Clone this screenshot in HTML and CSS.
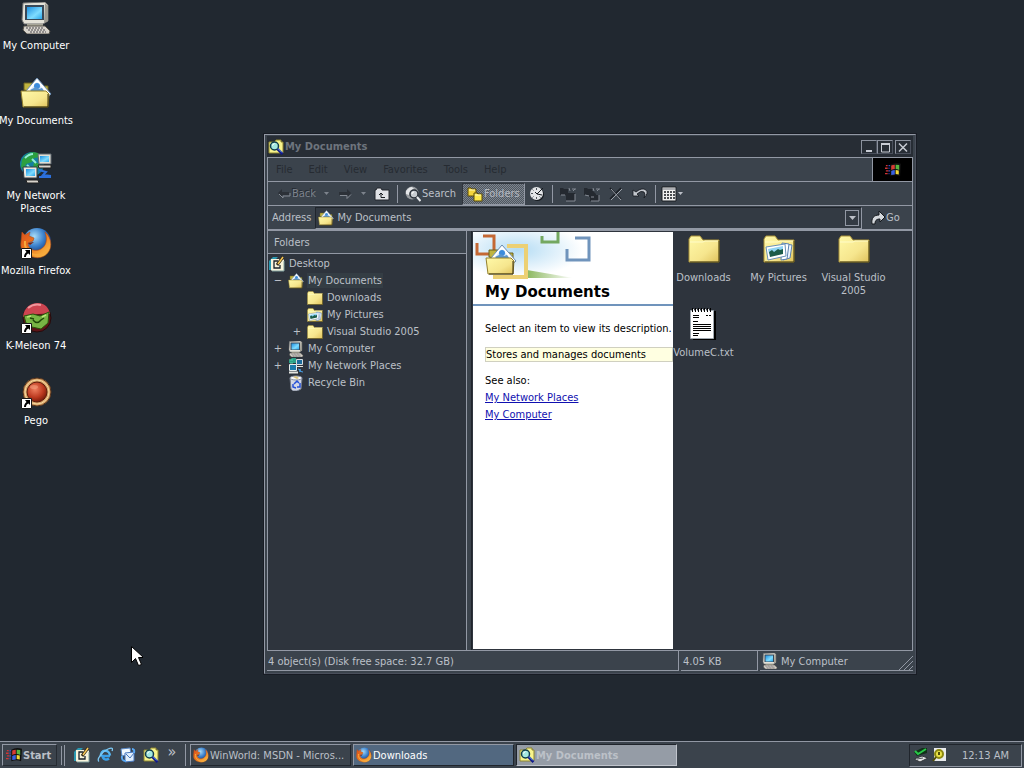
FILE: index.html
```html
<!DOCTYPE html>
<html lang="en">
<head>
    <title>My Documents</title>
    <meta charset="UTF-8">
    <meta name="viewport" content="width=device-width, initial-scale=1.0">
    <link rel="stylesheet" href="styles.css">
</head>
<body>
    <!-- Icon sprite -->
    <svg class="sprite" aria-hidden="true">
        <defs>
            <linearGradient id="gFolder" x1="0" y1="0" x2="1" y2="1">
                <stop offset="0" stop-color="#fff9a8"/><stop offset=".6" stop-color="#f6e68e"/><stop offset="1" stop-color="#dfc25c"/>
            </linearGradient>
            <linearGradient id="gScreen" x1="0" y1="0" x2="1" y2="1">
                <stop offset="0" stop-color="#1c8fe0"/><stop offset=".6" stop-color="#7fdcff"/><stop offset="1" stop-color="#2aa6ea"/>
            </linearGradient>
            <radialGradient id="gGlobe" cx=".4" cy=".3" r=".7">
                <stop offset="0" stop-color="#a8dcf8"/><stop offset=".5" stop-color="#3a80cc"/><stop offset="1" stop-color="#0e2460"/>
            </radialGradient>
            <linearGradient id="gFox" x1="0" y1="0" x2="1" y2="1">
                <stop offset="0" stop-color="#d8501c"/><stop offset=".5" stop-color="#ee7c20"/><stop offset="1" stop-color="#fcd050"/>
            </linearGradient>
            <radialGradient id="gRed" cx=".4" cy=".35" r=".7">
                <stop offset="0" stop-color="#f08060"/><stop offset=".6" stop-color="#bc3a20"/><stop offset="1" stop-color="#701808"/>
            </radialGradient>
            <radialGradient id="gSky" cx=".4" cy=".4" r=".6">
                <stop offset="0" stop-color="#b4dcf4"/><stop offset="1" stop-color="#ffffff"/>
            </radialGradient>
            <linearGradient id="gGrass" x1="0" y1="0" x2="1" y2="0">
                <stop offset="0" stop-color="#8cb860"/><stop offset="1" stop-color="#ffffff"/>
            </linearGradient>
        </defs>

        <symbol id="folder" viewBox="0 0 32 32">
            <path d="M1 6 3 3h9l3 4h16v22H1z" fill="url(#gFolder)" stroke="#a89038"/>
            <path d="M2 9h13l2-1h13" fill="none" stroke="#fffcc8"/>
            <path d="M31 8v21H2" fill="none" stroke="#4c4418"/>
        </symbol>
        <symbol id="pictures" viewBox="0 0 32 32">
            <use href="#folder"/>
            <path d="m22 11 7 1-2 13-7 2z" fill="#eef6ff" stroke="#5a80b0"/>
            <path d="m19 10 7 1-2 15-6 1z" fill="#fff" stroke="#5a80b0"/>
            <path d="m3 14 19-3 1 12-18 4z" fill="#fff" stroke="#6890b8"/>
            <path d="m5 16 15-3v5L6 21z" fill="#90d4f4"/>
            <path d="m6 19 3-2 2 2 4-3 2 1 3-1v5L7 24z" fill="#1c5c48"/>
        </symbol>
        <symbol id="docs" viewBox="0 0 32 32">
            <path d="M4 13V6h9l3 3h12v9z" fill="#c0b440" stroke="#6a6020"/>
            <path d="M17 1 31 17l-8 7L6 14z" fill="#fff" stroke="#6a8cb0"/>
            <path d="m17 5 8 9-7 5-8-6z" fill="#d4e8fa"/>
            <circle cx="17" cy="9" r="3" fill="#3c8cdc"/>
            <path d="m10 13 6-3 3 2 3-1 2 3-7 5z" fill="#5a94cc"/>
            <path d="M1 14h25l3 3-1 13H3z" fill="url(#gFolder)" stroke="#94802c"/>
            <path d="M28 17v13H4" fill="none" stroke="#383010"/>
        </symbol>
        <symbol id="computer" viewBox="0 0 32 32">
            <path d="M3 1 25 0l3 3v16l-5 3H4L2 18z" fill="#e4e2d8" stroke="#707070"/>
            <path d="m25 1 3 3v15l-4 2z" fill="#9c9a90"/>
            <path d="M5 3h19v15H5z" fill="#384858"/>
            <path d="M7 5h15v12H7z" fill="url(#gScreen)"/>
            <path d="M7 22h16v3H7z" fill="#a8a698"/>
            <path d="M4 24h21l5 5-1 3H7l-4-4z" fill="#d8d4cc" stroke="#58544c"/>
            <path d="M6 26h18M8 28h18M10 30h16" stroke="#4c4a50" stroke-dasharray="2 1"/>
        </symbol>
        <symbol id="network" viewBox="0 0 32 32">
            <circle cx="12" cy="12" r="12" fill="#1480a0"/>
            <path d="M2 8C6 1 12-1 18 1l3 4-7 1-2 4-6 2-2 6-3-3zM14 10l6 2-3 6-4-2z" fill="#2ca040"/>
            <path d="M5 6q4-4 8-4M12 7l4 4M7 13l4 4" fill="none" stroke="#90ecd8" stroke-width="2"/>
            <path d="M18 2h13v10H19z" fill="#e0ded4" stroke="#606870"/>
            <path d="M20 4h9v6h-9z" fill="url(#gScreen)"/>
            <path d="M18 13h13v3H19z" fill="#d8d4cc" stroke="#202020"/>
            <path d="M3 15h14v11H4z" fill="#ece8e0" stroke="#303840"/>
            <path d="M6 17h9v7H6z" fill="url(#gScreen)"/>
            <path d="M6 28h12l1 3H7z" fill="#d8d4cc" stroke="#202020"/>
            <path d="m19 18 7 2-3 3 8 1M19 25h12" fill="none" stroke="#2c70dc" stroke-width="2"/>
        </symbol>
        <symbol id="network-sm" viewBox="0 0 16 16">
            <path d="M1 3 4 0h4v5H1z" fill="#28a088"/>
            <path d="M1 2h4M2 5h3" stroke="#58d0a8"/>
            <path d="M8.500 1.500h6v5h-6z" fill="#1c6c9c" stroke="#d4dce0"/>
            <path d="M8 8.500h7" stroke="#e4e4e0"/>
            <path d="M1.500 6.500h7v6h-7z" fill="#1c7cac" stroke="#e8ecec"/>
            <path d="M1 14.500h9" stroke="#e4e4e0" stroke-width="2"/>
            <path d="m10 11 3 1-2 1 4 1" fill="none" stroke="#48a0e8"/>
        </symbol>
        <symbol id="firefox" viewBox="0 0 32 32">
            <circle cx="17" cy="15" r="14" fill="url(#gGlobe)"/>
            <path d="M2 5 5 8l5-3-1 4 5 2-1 3-5 2c0 7 8 9 13 6 5-3 7-9 4-17 5 4 7 11 5 17-3 8-11 10-17 8C3 28 0 22 1 15z" fill="url(#gFox)" stroke="#b44c14" stroke-width=".6"/>
            <path d="M5 14c-1 9 5 14 13 14 6 0 10-4 11-8" fill="none" stroke="#f8a83c" stroke-width="2"/>
            <path d="m8 16 6-1-4 3z" fill="#7c2410"/>
        </symbol>
        <symbol id="shortcut" viewBox="0 0 11 11">
            <path d="M.5.5h10v10H.5z" fill="#fff" stroke="#181818"/>
            <path d="M4 2h5v5L7.500 5.500C6 6 5 7 5 9H3c0-2 1-4 2.500-5z" fill="#000"/>
        </symbol>
        <symbol id="kmeleon" viewBox="0 0 32 32">
            <circle cx="17" cy="16" r="14" fill="#5c1418" stroke="#240c0c"/>
            <path d="M3 15C4 5 11 1 18 1c7 0 11 5 12 11-9-1-18 0-27 3z" fill="#cc4450"/>
            <path d="M8 6q6-5 13-3" fill="none" stroke="#f0969c" stroke-width="2"/>
            <path d="m4 14 9-2 7 2 9-4-1 11-7 6-9-2-6-4z" fill="#78b444" stroke="#28540c"/>
            <path d="M13 18q4 5 8 0l3-2M10 16l4 1" fill="none" stroke="#204808" stroke-width="1.500"/>
            <path d="m7 15 4-1M22 15l4-2" stroke="#b8e878" stroke-width="1.500"/>
        </symbol>
        <symbol id="pego" viewBox="0 0 32 32">
            <circle cx="17" cy="15" r="14" fill="#d8a468" stroke="#58341c"/>
            <circle cx="17" cy="15" r="12" fill="none" stroke="#f4d8a0"/>
            <circle cx="17" cy="15" r="10" fill="url(#gRed)" stroke="#5c1c0c"/>
            <ellipse cx="14" cy="10" rx="4" ry="2" fill="#f49c7c" opacity=".6"/>
        </symbol>
        <symbol id="notepad" viewBox="0 0 32 32">
            <path d="M5 3h23v29H5z" fill="#000"/>
            <path d="M2.500 2.500h23v28h-23z" fill="#fff" stroke="#a0a8b0"/>
            <path d="M4.500 0v4M7.500 0v4M10.500 0v4M13.500 0v4M16.500 0v4M19.500 0v4M22.500 0v4" stroke="#000"/>
            <path d="M5.500 1v2M8.500 1v2M11.500 1v2M14.500 1v2M17.500 1v2M20.500 1v2" stroke="#fff"/>
            <path d="M5 7.500h6M18 7.500h2M21 7.500h2M5 9.500h6M5 13.500h5M5 16.500h18M5 18.500h18M5 20.500h18M5 22.500h18M5 25.500h6M5 27.500h5" stroke="#000"/>
        </symbol>
        <symbol id="explore" viewBox="0 0 16 16">
            <path d="M1 3h5l2-2h5v2h2v11H1z" fill="#f8f48c" stroke="#8c8430"/>
            <circle cx="6.500" cy="7" r="4" fill="#a4e8e0" stroke="#103c4c" stroke-width="1.500"/>
            <path d="M4 6.500 6.500 4.500" stroke="#fff"/>
            <path d="m9.500 10 5 5" stroke="#10188c" stroke-width="2.500"/>
            <path d="m10 9.500 4 4" stroke="#78b4f0"/>
        </symbol>
        <symbol id="desktop" viewBox="0 0 16 16">
            <path d="M0 5 4 1h5L3 7v7H0z" fill="#2a98b0"/>
            <path d="M2 3h12l1 1v11H3l-1-1z" fill="#f8f4dc"/>
            <path d="M15 5v10H3" fill="none" stroke="#80a0a0"/>
            <path d="M9 5H5v7h6V9" fill="none" stroke="#182028" stroke-width="1.300"/>
            <path d="m8 9 6-8" stroke="#302818" stroke-width="3"/>
            <path d="m9 8 5-7" stroke="#f8c858" stroke-width="1.500"/>
        </symbol>
        <symbol id="recycle" viewBox="0 0 16 16">
            <path d="M2 3h12l-1 11-4 2H5l-2-2z" fill="#d4d8e4" stroke="#747c8c"/>
            <ellipse cx="8" cy="3" rx="6" ry="2" fill="#f8f8fc" stroke="#8890a0"/>
            <path d="m5 2 3-1 3 2-2 1z" fill="#d8c078"/>
            <path d="m6 9 3-3 2 2M12 8v4h-3M8 13l-3-1V9" fill="none" stroke="#2450d8" stroke-width="1.500"/>
        </symbol>
        <symbol id="ie" viewBox="0 0 16 16">
            <path d="M13 9H5.500C6 13 10 13 12 11.500" fill="none" stroke="#3ca0e8" stroke-width="2.400"/>
            <path d="M4 9.500C3 2 12.500 2 13 8.500" fill="none" stroke="#58b8f4" stroke-width="2.400"/>
            <path d="M2 14.500C-1 12 6 4 11 2s5 0 4 2" fill="none" stroke="#7cc8f4" stroke-width="1.300"/>
        </symbol>
        <symbol id="mail" viewBox="0 0 16 16">
            <path d="m1 2 9-1 1 6-9 2z" fill="#f0f8ff" stroke="#5888c8"/>
            <path d="m5 6 9-1v9l-9 1z" fill="#e0eefc" stroke="#4878c0"/>
            <path d="m6 7 4 4 4-5" fill="none" stroke="#4878c0"/>
            <path d="M2 9q-1 5 4 5M12 2q3 0 2 4" fill="none" stroke="#58a8f4" stroke-width="2"/>
        </symbol>
        <symbol id="flag" viewBox="0 0 18 16">
            <path d="M1 3h2M0 6h3M1 9h3M0 12h3" stroke="#d03434" stroke-width="1.500"/>
            <path d="M4 3h2M4 6h1M4 9h2M4 12h1" stroke="#3050d0" stroke-width="1.500"/>
            <path d="M6 2q5-3 12-1l-1 14q-5-2-11 0z" fill="#101010"/>
            <path d="M7 3q2-1 4-1v5q-2 0-4 1z" fill="#d83c34"/>
            <path d="M12 2q2 0 4 .500V8q-2-1-4-1z" fill="#58b440"/>
            <path d="M7 9q2-1 4-1v5q-2 0-4 .500z" fill="#3860e0"/>
            <path d="M12 8q2 0 3.500.500V13q-2 0-3.500-.500z" fill="#f0d838"/>
        </symbol>
        <symbol id="search" viewBox="0 0 16 16">
            <circle cx="7" cy="7" r="6.500" fill="#989ca0"/>
            <path d="M1 5q3-4 6-4l2 2-4 2-1 4-3-1z" fill="#e4e6e8"/>
            <circle cx="9" cy="8" r="4" fill="#c8ccd0" stroke="#2a3038" stroke-width="1.500"/>
            <path d="M7 8q0-2 2-2" fill="none" stroke="#fff"/>
            <path d="m12 11 3.500 4" stroke="#e8eaec" stroke-width="2"/>
        </symbol>
        <symbol id="folders" viewBox="0 0 16 16">
            <path d="M1 2h3l1 1h4v7H1z" fill="#f4d43c" stroke="#5c4c08"/>
            <path d="M7 7h3l1 1h4v7H7z" fill="#fce84c" stroke="#5c4c08"/>
            <path d="M2 4h6M8 9h6" stroke="#fffab8"/>
        </symbol>
        <symbol id="up" viewBox="0 0 16 16">
            <path d="M1 4h1l1-2h4l1 2h7v10H1z" fill="#e0e2e6" stroke="#22262c"/>
            <path d="M11 11.500H7V7M5 9l2-2 2 2" fill="none" stroke="#181c20"/>
        </symbol>
        <symbol id="back" viewBox="0 0 14 14">
            <path d="m1 6 4-4v3h7v3H5v3z" fill="#2c3138"/>
            <path d="m2 7 4 4V9h7V6" fill="none" stroke="#858b94"/>
        </symbol>
        <symbol id="forward" viewBox="0 0 14 14">
            <path d="m13 6-4-4v3H1v3h8v3z" fill="#2c3138"/>
            <path d="M2 8.500h7v3l4-4" fill="none" stroke="#858b94"/>
        </symbol>
        <symbol id="history" viewBox="0 0 16 16">
            <circle cx="8.500" cy="8.500" r="6.500" fill="#15191e"/>
            <circle cx="7.500" cy="7.500" r="6.500" fill="#e4e6e8"/>
            <path d="M7.500 2v2M2 7.500h2M7.500 11v2M3.500 3.500l1 1M3.500 11.500l1-1M10.500 10.500l1 1" stroke="#50565e"/>
            <path d="m6 6 2 2 6-6M8 8l5 1" fill="none" stroke="#15191e"/>
        </symbol>
        <symbol id="moveto" viewBox="0 0 16 16">
            <path d="M0 2h3l1 1h4v6H0zM6 7h9v8H6z" fill="#242930"/>
            <path d="M15 8v7H6M1 9h4M9 2l1 3M12 3h4M13 5l2-2" fill="none" stroke="#858b94"/>
        </symbol>
        <symbol id="copyto" viewBox="0 0 16 16">
            <path d="M0 2h3l1 1h4v6H0zM4 5h5l3 3v3H5zM6 9h9v6H6z" fill="#242930"/>
            <path d="M15 9v6H7M1 9l4 1M9 2l1 3M12 3h4M7 11h3M13 5l2-2" fill="none" stroke="#858b94"/>
        </symbol>
        <symbol id="delete" viewBox="0 0 14 14">
            <path d="m1 1 11 11M12 1 1 12" stroke="#1c2026" stroke-width="1.500"/>
            <path d="m2 2 10 11M13 2 2 13" stroke="#9ca2aa"/>
        </symbol>
        <symbol id="undo" viewBox="0 0 16 16">
            <path d="M1 4v6h6L5 8q4-4 7-2 2 2 0 6 5-5 2-8-4-3-10 2z" fill="#c4c8ce" stroke="#14181e" stroke-width=".8"/>
        </symbol>
        <symbol id="views" viewBox="0 0 16 16">
            <path d="M1 1h14v14H1z" fill="#f0f0f0" stroke="#181c20"/>
            <path d="M1 3h14" stroke="#6c7078"/>
            <path d="M3 6h2M6 6h2M9 6h2M12 6h2M3 9h2M6 9h2M9 9h2M12 9h2M3 12h2M6 12h2M9 12h2M12 12h2" stroke="#15191e" stroke-width="1.500"/>
        </symbol>
        <symbol id="go" viewBox="0 0 14 14">
            <path d="M1 13C0 7 3 4 8 4V0l6 6-5 5V8C5 8 4 10 4 13z" fill="#d4d8dc" stroke="#14181c"/>
        </symbol>
        <symbol id="drop" viewBox="0 0 7 4">
            <path d="M0 0h7L3.500 4z" fill="currentColor"/>
        </symbol>
        <symbol id="traynet" viewBox="0 0 16 16">
            <path d="m1 5 8-4 5 0v5L4 9z" fill="#103018"/>
            <path d="m2 4 3 3 8-5" fill="none" stroke="#28c848" stroke-width="2"/>
            <path d="m1 12 8-3 6 2-8 4z" fill="#e0e2e4" stroke="#303438"/>
            <path d="m4 12 6-1" stroke="#505458"/>
        </symbol>
        <symbol id="traykey" viewBox="0 0 16 16">
            <path d="M3 1h12v13H3z" fill="#e8eaec"/>
            <circle cx="8" cy="7" r="4" fill="#e8e048" stroke="#8c8810" stroke-width="2"/>
            <path d="M8 5v3M2 14l3-4" stroke="#504c08" stroke-width="2"/>
        </symbol>
    </svg>

    <main class="desktop">
        <nav class="shortcuts" aria-label="Desktop">
            <a class="shortcut" href="#"><svg class="icon-lg"><use href="#computer"/></svg><span>My Computer</span></a>
            <a class="shortcut" href="#"><svg class="icon-lg"><use href="#docs"/></svg><span>My Documents</span></a>
            <a class="shortcut" href="#"><svg class="icon-lg"><use href="#network"/></svg><span>My Network Places</span></a>
            <a class="shortcut" href="#"><svg class="icon-lg"><use href="#firefox"/></svg><svg class="link-badge"><use href="#shortcut"/></svg><span>Mozilla Firefox</span></a>
            <a class="shortcut" href="#"><svg class="icon-lg"><use href="#kmeleon"/></svg><svg class="link-badge"><use href="#shortcut"/></svg><span>K-Meleon 74</span></a>
            <a class="shortcut" href="#"><svg class="icon-lg"><use href="#pego"/></svg><svg class="link-badge"><use href="#shortcut"/></svg><span>Pego</span></a>
        </nav>

        <section class="window">
            <header class="titlebar">
                <svg class="icon"><use href="#explore"/></svg>
                <h1>My Documents</h1>
                <div class="caption-buttons">
                    <button aria-label="Minimize"><svg viewBox="0 0 12 11"><path d="M3 9h6" stroke="#c8ccd4" stroke-width="2"/></svg></button>
                    <button aria-label="Maximize"><svg viewBox="0 0 12 11"><path d="M2 1.500h9M2.500 1v9h8V1" fill="none" stroke="#c8ccd4"/><path d="M2 2h9" stroke="#c8ccd4" stroke-width="2"/></svg></button>
                    <button class="close" aria-label="Close"><svg viewBox="0 0 12 11"><path d="m2 1.500 8 8M10 1.500l-8 8" stroke="#c8ccd4" stroke-width="1.500"/></svg></button>
                </div>
            </header>

            <div class="bars">
                <div class="menubar">
                    <button>File</button>
                    <button>Edit</button>
                    <button>View</button>
                    <button>Favorites</button>
                    <button>Tools</button>
                    <button>Help</button>
                    <div class="throbber"><svg class="icon"><use href="#flag"/></svg></div>
                </div>

                <div class="toolbar">
                    <button class="tool disabled"><svg class="icon-sm"><use href="#back"/></svg>Back</button>
                    <button class="tool arrow disabled" aria-label="Back list"><svg class="drop"><use href="#drop"/></svg></button>
                    <button class="tool disabled" aria-label="Forward"><svg class="icon-sm"><use href="#forward"/></svg></button>
                    <button class="tool arrow disabled" aria-label="Forward list"><svg class="drop"><use href="#drop"/></svg></button>
                    <button class="tool" aria-label="Up"><svg class="icon"><use href="#up"/></svg></button>
                    <span class="separator"></span>
                    <button class="tool"><svg class="icon"><use href="#search"/></svg>Search</button>
                    <button class="tool pressed"><svg class="icon"><use href="#folders"/></svg>Folders</button>
                    <button class="tool" aria-label="History"><svg class="icon"><use href="#history"/></svg></button>
                    <span class="separator"></span>
                    <button class="tool" aria-label="Move To"><svg class="icon"><use href="#moveto"/></svg></button>
                    <button class="tool" aria-label="Copy To"><svg class="icon"><use href="#copyto"/></svg></button>
                    <button class="tool" aria-label="Delete"><svg class="icon-sm"><use href="#delete"/></svg></button>
                    <button class="tool" aria-label="Undo"><svg class="icon"><use href="#undo"/></svg></button>
                    <span class="separator"></span>
                    <button class="tool views" aria-label="Views"><svg class="icon"><use href="#views"/></svg><svg class="drop"><use href="#drop"/></svg></button>
                </div>

                <div class="addressbar">
                    <label for="address">Address</label>
                    <div class="combo">
                        <svg class="icon"><use href="#docs"/></svg>
                        <select id="address"><option>My Documents</option></select>
                        <span class="combo-arrow"><svg class="drop"><use href="#drop"/></svg></span>
                    </div>
                    <button class="go"><svg class="icon-sm"><use href="#go"/></svg>Go</button>
                </div>
            </div>

            <div class="panes">
                <aside class="folders">
                    <h2>Folders</h2>
                    <ul class="tree">
                        <li>
                            <div class="node"><svg class="icon"><use href="#desktop"/></svg><span>Desktop</span></div>
                            <ul>
                                <li>
                                    <div class="node"><button class="toggle">−</button><svg class="icon"><use href="#docs"/></svg><span class="current">My Documents</span></div>
                                    <ul>
                                        <li><div class="node"><span class="toggle"></span><svg class="icon"><use href="#folder"/></svg><span>Downloads</span></div></li>
                                        <li><div class="node"><span class="toggle"></span><svg class="icon"><use href="#pictures"/></svg><span>My Pictures</span></div></li>
                                        <li><div class="node"><button class="toggle">+</button><svg class="icon"><use href="#folder"/></svg><span>Visual Studio 2005</span></div></li>
                                    </ul>
                                </li>
                                <li><div class="node"><button class="toggle">+</button><svg class="icon"><use href="#computer"/></svg><span>My Computer</span></div></li>
                                <li><div class="node"><button class="toggle">+</button><svg class="icon"><use href="#network-sm"/></svg><span>My Network Places</span></div></li>
                                <li><div class="node"><span class="toggle"></span><svg class="icon"><use href="#recycle"/></svg><span>Recycle Bin</span></div></li>
                            </ul>
                        </li>
                    </ul>
                </aside>

                <div class="content">
                    <article class="webview">
                        <header class="banner">
                            <svg class="banner-art" viewBox="0 0 200 48">
                                <path d="M0 0h110v36q-50 14-110 6z" fill="url(#gSky)"/>
                                <path d="M54 46V38q24 4 46 8z" fill="url(#gGrass)"/>
                                <path d="M34 14h19v31H20" fill="none" stroke="#ecd074" stroke-width="4"/>
                                <path d="M10 4h11v14M4 11v11h12" fill="none" stroke="#c46834" stroke-width="3"/>
                                <path d="M69 4v6h16V0" fill="none" stroke="#74a860" stroke-width="3"/>
                                <path d="M102 6h14v22H94V17" fill="none" stroke="#7094bc" stroke-width="3"/>
                                <svg x="12" y="12" width="32" height="32"><use href="#docs"/></svg>
                            </svg>
                            <h2>My Documents</h2>
                        </header>
                        <div class="webview-body">
                            <p>Select an item to view its description.</p>
                            <p class="hint">Stores and manages documents</p>
                            <p class="also">See also:</p>
                            <a href="#">My Network Places</a>
                            <a href="#">My Computer</a>
                        </div>
                    </article>

                    <div class="files">
                        <a class="file" href="#"><svg class="icon-lg"><use href="#folder"/></svg><span>Downloads</span></a>
                        <a class="file" href="#"><svg class="icon-lg"><use href="#pictures"/></svg><span>My Pictures</span></a>
                        <a class="file" href="#"><svg class="icon-lg"><use href="#folder"/></svg><span>Visual Studio 2005</span></a>
                        <a class="file" href="#"><svg class="icon-lg"><use href="#notepad"/></svg><span>VolumeC.txt</span></a>
                    </div>
                </div>
            </div>

            <footer class="statusbar">
                <span class="status-main">4 object(s) (Disk free space: 32.7 GB)</span>
                <span class="status-size">4.05 KB</span>
                <span class="status-zone"><svg class="icon"><use href="#computer"/></svg>My Computer</span>
                <svg class="grip" viewBox="0 0 14 14"><path d="M14 0 0 14M14 5 5 14M14 10l-4 4" stroke="#9298a4"/></svg>
            </footer>
        </section>

        <svg class="cursor" viewBox="0 0 12 20"><path d="M.5.5v16l4-4 3 7 3-1-3-7h5z" fill="#fff" stroke="#000"/></svg>
    </main>

    <footer class="taskbar">
        <button class="start"><svg class="icon"><use href="#flag"/></svg>Start</button>
        <div class="quicklaunch">
            <button aria-label="Show Desktop"><svg class="icon"><use href="#desktop"/></svg></button>
            <button aria-label="Internet Explorer"><svg class="icon"><use href="#ie"/></svg></button>
            <button aria-label="Outlook Express"><svg class="icon"><use href="#mail"/></svg></button>
            <button aria-label="Explorer"><svg class="icon"><use href="#explore"/></svg></button>
            <button class="more" aria-label="More">»</button>
        </div>
        <div class="tasks">
            <button class="task"><svg class="icon"><use href="#firefox"/></svg><span>WinWorld: MSDN - Micros...</span></button>
            <button class="task alert"><svg class="icon"><use href="#firefox"/></svg><span>Downloads</span></button>
            <button class="task active"><svg class="icon"><use href="#explore"/></svg><span>My Documents</span></button>
        </div>
        <div class="tray">
            <svg class="icon"><use href="#traynet"/></svg>
            <svg class="icon"><use href="#traykey"/></svg>
            <time>12:13 AM</time>
        </div>
    </footer>
</body>
</html>
```
FILE: styles.css
```css
* { margin: 0; padding: 0; box-sizing: border-box; }
body { display: flex; flex-direction: column; height: 100vh; overflow: hidden; background: #212830; color: #bcc0c8; font: 11px/13px "DejaVu Sans Condensed", "DejaVu Sans", sans-serif; }
button, select { font: inherit; color: inherit; background: none; border: none; }
a { color: inherit; text-decoration: none; }
ul { list-style: none; }
svg { display: block; flex: none; }
.sprite { position: absolute; width: 0; height: 0; }
.icon { width: 16px; height: 16px; }
.icon-sm { width: 14px; height: 14px; }
.icon-lg { width: 32px; height: 32px; }
.drop { width: 7px; height: 4px; }

/* desktop */
.desktop { position: relative; flex: 1; min-height: 0; }
.shortcuts { display: flex; flex-direction: column; width: 76px; margin-left: -2px; padding-top: 2px; }
.shortcut { position: relative; display: flex; flex-direction: column; align-items: center; gap: 5px; height: 75px; color: #fff; text-align: center; }
.link-badge { position: absolute; left: 23px; top: 21px; width: 11px; height: 11px; }
.cursor { position: absolute; left: 131px; top: 646px; width: 12px; height: 20px; }

/* explorer window */
.window { position: absolute; left: 264px; top: 134px; right: 108px; bottom: 67px; display: flex; flex-direction: column; padding: 1px 2px 2px; background: #3b434c; border: 1px solid #4a505c; border-top-color: #9298a4; border-left-color: #9298a4; box-shadow: 0 0 0 1px #181c24; }
.titlebar { display: flex; align-items: center; gap: 1px; height: 21px; padding: 0 2px 0 1px; background: #272d35; }
.titlebar h1 { flex: 1; font-size: 11px; color: #6d747d; font-weight: bold; }
.caption-buttons { display: flex; }
.caption-buttons button { width: 16px; height: 14px; padding: 1px; border: 1px solid #8c929e; border-right-color: #4a505c; border-bottom-color: #4a505c; }
.caption-buttons svg { width: 12px; height: 11px; }
.caption-buttons .close { margin-left: 2px; }

.bars { border: 1px solid #9298a4; border-bottom: none; }
.menubar, .toolbar, .addressbar { display: flex; align-items: center; height: 24px; border-bottom: 1px solid #9298a4; }
.menubar button { padding: 0 8px; color: #262b32; }
.throbber { display: flex; align-items: center; justify-content: center; align-self: stretch; width: 40px; margin-left: auto; background: #000; border-left: 1px solid #9298a4; }
.toolbar { padding-left: 5px; }
.tool { display: flex; align-items: center; justify-content: center; gap: 1px; height: 22px; min-width: 24px; padding: 0 4px; }
.tool.arrow { min-width: 13px; padding: 0; }
.tool.disabled { color: #7d838c; text-shadow: -1px -1px 0 #262b32; }
.tool.arrow .drop { width: 5px; height: 3px; }
.tool.pressed { color: #b4b8c0; background: repeating-conic-gradient(#7e858e 0 25%, #4f5761 0 50%) 0 0 / 2px 2px; border: 1px solid #9298a4; border-top-color: #30353d; border-left-color: #30353d; margin-left: 2px; }
.tool.views { gap: 1px; padding: 0 2px; }
.tool.views .drop { width: 5px; height: 3px; }
.separator { width: 1px; height: 18px; margin: 0 3px; background: #9298a4; }
.addressbar { gap: 4px; padding-left: 4px; }
.combo { display: flex; align-items: center; flex: 1; height: 22px; padding: 0 2px; gap: 3px; background: #333a43; border: 1px solid #20252c; border-right-color: #9298a4; border-bottom-color: #9298a4; }
.combo select { flex: 1; min-width: 0; margin-right: -17px; appearance: none; }
.combo-arrow { display: flex; align-items: center; justify-content: center; width: 14px; height: 16px; border: 1px solid #9298a4; pointer-events: none; }
.go { display: flex; align-items: center; gap: 1px; width: 46px; padding-left: 5px; }

.panes { display: flex; flex: 1; min-height: 0; gap: 4px; border: 1px solid #9298a4; background: #3b434c; }
.folders { width: 199px; background: #2e343d; border-right: 1px solid #9298a4; }
.folders h2 { height: 23px; padding: 5px 6px; font-size: 11px; font-weight: normal; background: #3b434c; border-bottom: 1px solid #9298a4; }
.tree { padding: 1px 1px 0; }
.tree ul .node { padding-left: 2px; }
.tree ul ul .node { padding-left: 21px; }
.node { display: flex; align-items: center; gap: 3px; height: 17px; }
.node span:last-child { padding: 1px; }
.node .toggle { width: 14px; text-align: center; }
.current { background: #343d44; }
.content { display: flex; flex: 1; min-width: 0; padding: 1px; background: #2e343d; border-left: 1px solid #20252c; }
.webview { width: 200px; background: #fff; color: #000; }
.banner { height: 74px; border-bottom: 2px solid #7094bc; }
.banner-art { width: 200px; height: 48px; }
.banner h2 { padding-left: 12px; font: bold 15px/24px "DejaVu Sans", sans-serif; }
.webview-body { padding: 16px 0 0 12px; }
.webview-body p { margin-bottom: 12px; white-space: nowrap; }
.webview-body .hint { background: #ffffe1; border: 1px solid #d0d0c0; }
.webview-body .also { margin-bottom: 4px; }
.webview-body a { display: block; width: max-content; margin-bottom: 4px; color: #1010b0; text-decoration: underline; }
.files { flex: 1; display: grid; grid-template-columns: repeat(auto-fill, 75px); grid-auto-rows: 75px; align-content: start; margin-left: -7px; padding-top: 1px; }
.file { display: flex; flex-direction: column; align-items: center; gap: 6px; text-align: center; }

.statusbar { position: relative; display: flex; align-items: center; gap: 2px; height: 20px; }
.statusbar span { display: flex; align-items: center; gap: 3px; height: 20px; padding: 1px 0 0 2px; border-right: 1px solid #9298a4; border-bottom: 1px solid #9298a4; }
.statusbar .status-main { flex: 1; padding-left: 1px; }
.status-size { width: 77px; }
.statusbar .status-zone { width: 153px; border-right: none; }
.grip { position: absolute; right: 0; bottom: 1px; width: 14px; height: 14px; }

/* taskbar */
.taskbar { display: flex; align-items: center; height: 27px; padding: 1px 2px; background: #3b434c; border-top: 1px solid #9298a4; }
.start { display: flex; align-items: center; gap: 1px; width: 55px; height: 22px; padding: 0 3px; font-weight: bold; border: 1px solid #9298a4; border-right-color: #262b32; border-bottom-color: #262b32; }
.quicklaunch { display: flex; align-items: center; height: 21px; margin-left: 7px; padding-left: 5px; border-left: 1px solid #9298a4; box-shadow: -3px 0 0 -1px #3b434c, -4px 0 0 -1px #9298a4; }
.quicklaunch button { display: flex; justify-content: center; width: 23px; }
.quicklaunch .more { width: 20px; height: 20px; font-size: 16px; }
.tasks { display: flex; flex: 1; gap: 2px; margin-left: 3px; padding-left: 4px; border-left: 1px solid #9298a4; }
.task { display: flex; align-items: center; gap: 1px; width: 161px; height: 22px; padding: 0 2px; border: 1px solid #9298a4; border-right-color: #20252c; border-bottom-color: #20252c; text-align: left; white-space: nowrap; }
.task.alert { background: #526880; color: #fff; }
.task.active { background: #959ca6; color: #bcc1c8; font-weight: bold; border-color: #20252c #c0c4cc #c0c4cc #20252c; }
.tray { display: flex; align-items: center; gap: 2px; height: 23px; padding: 0 12px 0 3px; border: 1px solid #20252c; border-right-color: #9298a4; border-bottom-color: #9298a4; }
.tray time { margin-left: 13px; }
```
